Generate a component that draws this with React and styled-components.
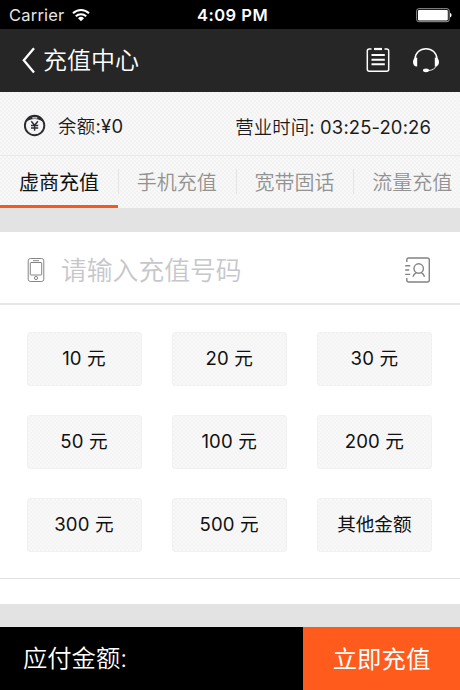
import React from 'react'
import styled, { createGlobalStyle, css } from 'styled-components'

const GlobalStyle = createGlobalStyle`
  * {
    box-sizing: border-box;
  }

  body {
    margin: 0;
    background: #fff;
    font-family: Inter, 'Noto Sans CJK SC', sans-serif;
    color: #1c1c1c;
  }

  button,
  input {
    font-family: inherit;
    border: 0;
    margin: 0;
    padding: 0;
  }
`

const texture = css`
  background-color: #f8f8f8;
  background-image: conic-gradient(#f2f2f2 25%, transparent 0 50%, #f2f2f2 0 75%, transparent 0);
  background-size: 4px 4px;
`

const Page = styled.div`
  width: 460px;
  height: 690px;
  display: flex;
  flex-direction: column;
  overflow: hidden;
  background: #fff;
`

const StatusBar = styled.div`
  height: 29px;
  flex: none;
  display: grid;
  grid-template-columns: 1fr auto 1fr;
  align-items: center;
  padding: 1px 8px 0 9px;
  background: #000;
  color: #fff;
  font-size: 16.5px;
`

const Carrier = styled.div`
  display: flex;
  align-items: center;
  gap: 8px;
  letter-spacing: 0.2px;
  color: #e6e6e6;
`

const Clock = styled.div`
  padding-left: 4px;
  font-weight: 600;
  letter-spacing: 0.5px;
`

const Battery = styled.svg`
  justify-self: end;
`

const Header = styled.header`
  height: 63px;
  flex: none;
  display: flex;
  align-items: center;
  padding: 0 20px 0 21px;
  background: #262626;
  color: #fff;
`

const Title = styled.h1`
  flex: 1;
  margin: 1px 0 0 7px;
  font-size: 24px;
  font-weight: 350;
  line-height: 36px;
`

const HeaderIcons = styled.div`
  display: flex;
  gap: 22px;
  margin-bottom: 2px;
`

const Balance = styled.div`
  ${texture}
  height: 64px;
  flex: none;
  display: flex;
  align-items: center;
  padding: 5px 29px 0 23px;
  border-bottom: 1px solid #e9e9e9;
  font-size: 18.4px;
  font-weight: 350;
`

const BalanceText = styled.span`
  flex: 1;
  margin: 0 0 2px 11px;
  letter-spacing: 0.3px;
`

const Hours = styled.span`
  margin-bottom: 1px;
  letter-spacing: 0.15px;
`

const Figures = styled.span`
  font-weight: 400;
`

const Tabs = styled.nav`
  ${texture}
  height: 52px;
  flex: none;
  display: flex;
  overflow: hidden;
`

const Tab = styled.a`
  width: 117.8px;
  flex: none;
  display: flex;
  align-items: center;
  justify-content: center;
  padding-top: 1px;
  border-bottom: 3px solid ${p => (p.$active ? '#f4591f' : 'transparent')};
  color: ${p => (p.$active ? '#111' : '#929292')};
  font-size: 20px;
  font-weight: ${p => (p.$active ? 400 : 350)};
`

const TabDivider = styled.i`
  width: 1px;
  height: 25px;
  flex: none;
  margin: 13px -1px 0 0;
  background: #e4e4e4;
`

const Gap = styled.div`
  height: ${p => p.$height}px;
  flex: none;
  background: #e3e3e3;
`

const NumberRow = styled.label`
  height: 73px;
  flex: none;
  display: flex;
  align-items: center;
  padding: 4px 29px 0 27px;
  border-bottom: 2px solid #e6e6e6;
`

const NumberInput = styled.input`
  flex: 1;
  min-width: 0;
  height: 44px;
  margin-left: 16px;
  padding-top: 2px;
  background: transparent;
  font-size: 25.8px;
  font-weight: 350;
  outline: none;

  &::placeholder {
    color: #c7c7cb;
    opacity: 1;
  }
`

const Amounts = styled.div`
  flex: none;
  height: 274px;
  display: grid;
  grid-template-columns: repeat(3, 115px);
  grid-auto-rows: 54px;
  gap: 29px 30.2px;
  padding: 27px 27px 0;
  border-bottom: 1px solid #e0e0e0;
`

const Amount = styled.button`
  ${texture}
  background-image: conic-gradient(#f4f4f4 25%, transparent 0 50%, #f4f4f4 0 75%, transparent 0);
  border: 1px solid #f1f1f1;
  border-radius: 3px;
  padding: 0 1px 2px 0;
  color: #111;
  font-size: 18.6px;
  line-height: 28px;
  letter-spacing: ${p => (p.$spaced ? '0.15px' : '0')};
`

const Spacer = styled.div`
  height: 25px;
  flex: none;
`

const Footer = styled.footer`
  flex: 1;
  display: flex;
`

const Total = styled.div`
  width: 303px;
  display: flex;
  align-items: center;
  padding: 0 0 5px 23px;
  background: #000;
  color: #fff;
  font-size: 24.3px;
  font-weight: 350;
`

const PayButton = styled.button`
  flex: 1;
  padding-bottom: 2px;
  background: #ff5b1d;
  color: #fff;
  font-size: 24.4px;
`

const amounts = ['10 元', '20 元', '30 元', '50 元', '100 元', '200 元', '300 元', '500 元', '其他金额']
const tabs = ['虚商充值', '手机充值', '宽带固话', '流量充值']

const WifiIcon = () => (
  <svg width="18" height="14" viewBox="0 0 18 14" fill="none" stroke="#fff" strokeWidth="2.1">
    <path d="M1 5.2a11.5 11.5 0 0 1 16 0" />
    <path d="M3.8 8.3a7.5 7.5 0 0 1 10.4 0" />
    <path d="M9 13.2 6 10.3a4.3 4.3 0 0 1 6 0z" fill="#fff" stroke="none" />
  </svg>
)

const BatteryIcon = () => (
  <Battery width="36" height="15" viewBox="0 0 36 15">
    <rect x="0.7" y="0.7" width="32.4" height="13" rx="2" fill="none" stroke="#999" />
    <rect x="2" y="2" width="29.8" height="10.4" rx="1" fill="#fff" />
    <path d="M34 5c2 .6 2 3.8 0 4.4z" fill="#fff" />
  </Battery>
)

const BackIcon = () => (
  <svg width="15" height="28" viewBox="0 0 15 28" fill="none" stroke="#fff" strokeWidth="2.3">
    <path d="M13 1.2 2.8 13.3 13 25.5" />
  </svg>
)

const OrdersIcon = () => (
  <svg width="24" height="26" viewBox="0 0 24 26" fill="none" stroke="#fff" strokeWidth="1.5">
    <path d="M5.5 2H3.2Q1.3 2 1.3 4v18.3q0 2 2 2h17.4q2 0 2-2V4q0-2-2-2H18.5" />
    <path d="M8 2h8" strokeWidth="2.2" />
    <path d="M5.5 8h13.3M5.5 12.7h13.3M5.5 17.3h13.3" strokeWidth="2" />
  </svg>
)

const HeadsetIcon = () => (
  <svg width="28" height="26" viewBox="0 0 28 26" fill="none" stroke="#fff" strokeWidth="1.5">
    <path d="M3 12C3.3 5.8 8 1.7 14 1.7S24.7 5.8 25 12" />
    <path d="M24.3 19c-1.3 2.6-4 4.3-7.8 4.6" strokeWidth="0.9" />
    <path
      d="M5.2 10.5v9C2.3 19.5 1 17.7 1 15s1.3-4.5 4.2-4.5zM22.8 10.5v9c2.9 0 4.2-1.8 4.2-4.5s-1.3-4.5-4.2-4.5z"
      fill="#fff"
      stroke="none"
    />
    <ellipse cx="14" cy="23.3" rx="3" ry="1.9" fill="#fff" stroke="none" />
  </svg>
)

const CoinIcon = () => (
  <svg width="24" height="24" viewBox="0 0 24 24" fill="none" stroke="#2b2b30">
    <circle cx="11.6" cy="11.5" r="9.7" strokeWidth="1.9" />
    <path d="M2.8 8Q5 1.7 11.6 1.7T20.4 8L17.3 6.3Q11.6 3.7 5.9 6.300z" fill="#2b2b30" stroke="none" />
    <path d="M9.3 3.9h5" stroke="#f7f7f7" strokeWidth="1.2" />
    <path d="M8.3 7.3 11.6 11.3 14.9 7.3M11.6 11.3v5.500M8 11.500h7.200M8 14h7.200" strokeWidth="1.4" />
  </svg>
)

const PhoneIcon = () => (
  <svg width="18" height="26" viewBox="0 0 18 26" fill="none" stroke="#858585" strokeWidth="1">
    <rect x="1.2" y="1.5" width="15.6" height="23" rx="2.3" />
    <rect x="3.3" y="5.5" width="11.4" height="12.5" rx="0.6" />
    <path d="M6 3.7h6" />
    <circle cx="9" cy="21" r="1.6" />
  </svg>
)

const ContactsIcon = () => (
  <svg width="28" height="28" viewBox="0 0 28 28" fill="none" stroke="#838383" strokeWidth="1.4">
    <path d="M3.8 6V4q0-2 2-2h18.5q2 0 2 2v20q0 2-2 2H5.8q-2 0-2-2v-2" />
    <path d="M2.2 9.7h5M2.2 14h4M2.2 18.4h5" />
    <circle cx="15.7" cy="12.5" r="4.7" />
    <path d="M9.9 20.8q1-3 3.5-4.2M21.6 20.8q-1-3-3.5-4.2" />
  </svg>
)

export default () => (
  <Page>
    <GlobalStyle />
    <StatusBar>
      <Carrier>
        Carrier
        <WifiIcon />
      </Carrier>
      <Clock>4:09 PM</Clock>
      <BatteryIcon />
    </StatusBar>
    <Header>
      <BackIcon />
      <Title>充值中心</Title>
      <HeaderIcons>
        <OrdersIcon />
        <HeadsetIcon />
      </HeaderIcons>
    </Header>
    <Balance>
      <CoinIcon />
      <BalanceText>
        余额<Figures>:¥0</Figures>
      </BalanceText>
      <Hours>
        营业时间<Figures>: 03:25-20:26</Figures>
      </Hours>
    </Balance>
    <Tabs>
      {tabs.map((name, i) => (
        <React.Fragment key={name}>
          {i > 0 && <TabDivider />}
          <Tab $active={i === 0}>{name}</Tab>
        </React.Fragment>
      ))}
    </Tabs>
    <Gap $height={24} />
    <NumberRow>
      <PhoneIcon />
      <NumberInput placeholder="请输入充值号码" />
      <ContactsIcon />
    </NumberRow>
    <Amounts>
      {amounts.map(label => (
        <Amount key={label} $spaced={label.endsWith('元')}>
          {label}
        </Amount>
      ))}
    </Amounts>
    <Spacer />
    <Gap $height={23} />
    <Footer>
      <Total>应付金额:</Total>
      <PayButton>立即充值</PayButton>
    </Footer>
  </Page>
)
